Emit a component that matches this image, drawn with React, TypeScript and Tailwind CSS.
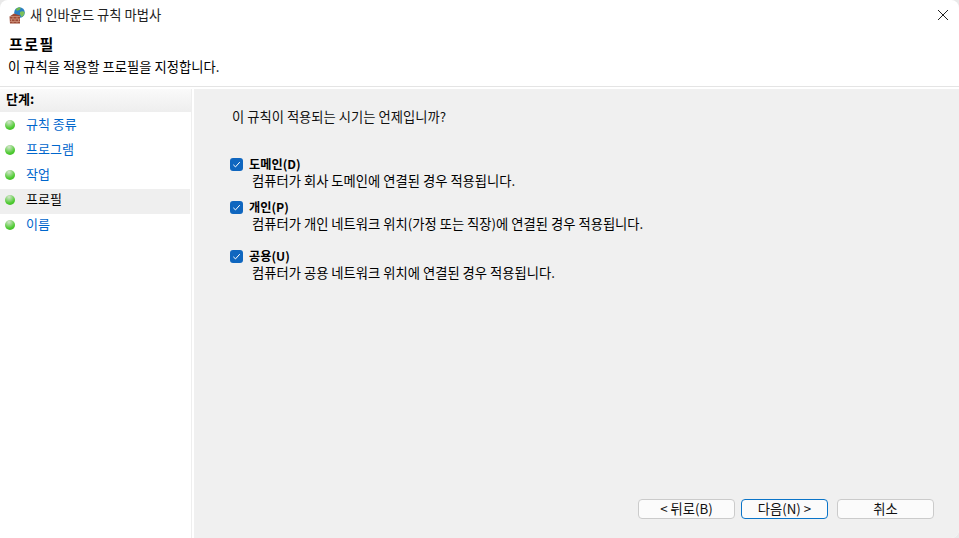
import React from "react";

const steps = [
  { label: "규칙 종류" },
  { label: "프로그램" },
  { label: "작업" },
  { label: "프로필", active: true },
  { label: "이름" },
];

const options = [
  { title: "도메인(D)", desc: "컴퓨터가 회사 도메인에 연결된 경우 적용됩니다.", mb: "mb-[9px]" },
  { title: "개인(P)", desc: "컴퓨터가 개인 네트워크 위치(가정 또는 직장)에 연결된 경우 적용됩니다.", mb: "mb-[15px]" },
  { title: "공용(U)", desc: "컴퓨터가 공용 네트워크 위치에 연결된 경우 적용됩니다.", mb: "" },
];

const FirewallIcon = () => (
  <svg width="16" height="17" viewBox="0 0 16 17" className="shrink-0">
    <circle cx="10.500" cy="5.500" r="5.300" fill="#2a7fc4" />
    <path d="M7 2.500c1-1.800 3-2.300 4.500-1.800.5 1-.5 2-1.500 2.300S8 5 7 2.500z" fill="#6fb84a" />
    <path d="M11 5c1.500-1 3.500-.8 4.700.2-.2 2-1.200 3.800-3 4.800-1.200-1-2.200-3.300-1.700-5z" fill="#7cc05a" />
    <path d="M0.500 9.500L5 6.500l6 2V16.500H1z" fill="#9c4a35" />
    <path d="M1 9.500h10M1 12h10M1 14.500h10M4 9.500V12M8 9.500V12M2.500 12v2.500M6 12v2.500M9.500 12v2.500M4 14.500v2M8 14.500v2" stroke="#d49a82" strokeWidth="0.7" fill="none" />
  </svg>
);

const Bullet = () => (
  <span className="block w-[10px] h-[10px] rounded-full shrink-0 bg-[radial-gradient(circle_at_40%_20%,#d4e4cc_0%,#9ad98a_28%,#4fcb32_62%,#35b51f_100%)]" />
);

const Check = () => (
  <span className="flex items-center justify-center w-[13px] h-[13px] rounded-[3px] bg-[#0f66bf] shrink-0">
    <svg width="9" height="9" viewBox="0 0 9 9">
      <path d="M1.300 4.800L3.500 6.900L7.800 2.100" stroke="#ffffff" strokeWidth="1" fill="none" />
    </svg>
  </span>
);

const Btn = ({ children, primary }: { children: React.ReactNode; primary?: boolean }) => (
  <button
    className={`h-[20px] rounded-[4px] bg-[#fbfbfb] text-[13.300px] leading-none text-[#111] flex items-center justify-center border ${
      primary ? "w-[87px] border-[#0a74c8]" : "w-[97px] border-[#cbcbcb]"
    }`}
  >
    {children}
  </button>
);

export default function App() {
  return (
    <div className="w-[959px] h-[538px] overflow-hidden bg-[#e9e9e9] font-['Noto_Sans_CJK_KR','Noto_Sans',sans-serif] text-[13.300px] text-black">
      <div className="w-full h-full bg-white rounded-t-[8px] rounded-br-[8px] flex flex-col">
        <div className="h-[30px] shrink-0 flex items-center pl-[9px] pr-[11px]">
          <FirewallIcon />
          <span className="ml-[5px] text-[13.300px] text-[#222]">새 인바운드 규칙 마법사</span>
          <svg width="10" height="10" viewBox="0 0 10 10" className="ml-auto">
            <path d="M0 0L10 10M10 0L0 10" stroke="#222" strokeWidth="1" fill="none" />
          </svg>
        </div>
        <div className="h-[57px] shrink-0 pl-[9px] border-b border-[#e4e4e4]">
          <div className="font-bold text-[15px] tracking-[1.500px] leading-[18px] mt-[5px]">프로필</div>
          <div className="text-[13.300px] leading-[18px] mt-[5px] -ml-[1px]">이 규칙을 적용할 프로필을 지정합니다.</div>
        </div>
        <div className="flex-1 flex pt-[2px] min-h-0">
          <div className="w-[192px] shrink-0 border-r border-[#eeeeee] mr-[2px]">
            <div className="h-[23px] pl-[6px] pb-[3px] flex items-center font-bold text-[13px] bg-gradient-to-b from-[#fafafa] to-[#eeeeee]">
              단계:
            </div>
            <div className="pt-[2px]">
              {steps.map((s) => (
                <div
                  key={s.label}
                  className={`h-[25px] flex items-center pl-[5px] pb-[4px] mr-[1px] ${s.active ? "bg-[#efefef]" : ""}`}
                >
                  <Bullet />
                  <span className={`ml-[11px] pb-[2px] text-[13px] ${s.active ? "text-black" : "text-[#0066cc]"}`}>
                    {s.label}
                  </span>
                </div>
              ))}
            </div>
          </div>
          <div className="flex-1 bg-[#f0f0f0] rounded-br-[8px] pl-[36px] flex flex-col">
            <div className="text-[13.300px] leading-[18px] mt-[19px] ml-[2px] text-[#111]">이 규칙이 적용되는 시기는 언제입니까?</div>
            <div className="mt-[29px] flex flex-col">
              {options.map((o) => (
                <div key={o.title} className={`flex ${o.mb}`}>
                  <div className="pt-[3px]">
                    <Check />
                  </div>
                  <div className="ml-[6px]">
                    <div className="font-bold text-[12.200px] leading-[16px] pt-[1px]">{o.title}</div>
                    <div className="text-[13.300px] leading-[17px] ml-[3px]">{o.desc}</div>
                  </div>
                </div>
              ))}
            </div>
            <div className="mt-auto mb-[19px] mr-[25px] flex justify-end">
              <Btn>&lt; 뒤로(B)</Btn>
              <div className="ml-[6px]">
                <Btn primary>다음(N) &gt;</Btn>
              </div>
              <div className="ml-[9px]">
                <Btn>취소</Btn>
              </div>
            </div>
          </div>
        </div>
      </div>
    </div>
  );
}
